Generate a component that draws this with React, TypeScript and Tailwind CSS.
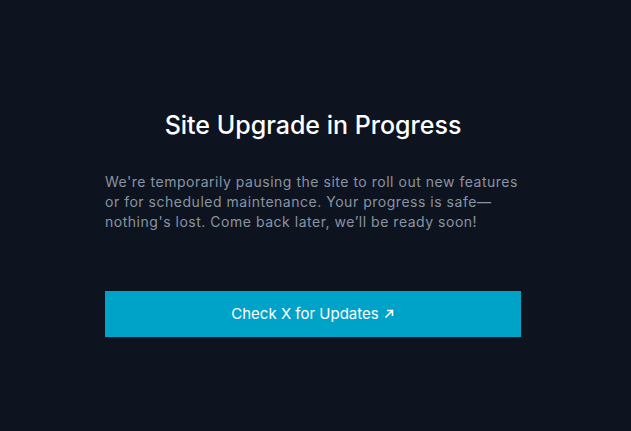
export default function App() {
  return (
    <div
      className="w-full h-[431px] bg-[#0d1420] flex justify-center pr-[5px]"
      style={{ fontFamily: "Inter, 'Noto Sans', sans-serif" }}
    >
      <div className="w-[416px] flex flex-col pt-[109px]">
        <h1 className="text-center text-white text-[25px] leading-[32px] font-medium">
          Site Upgrade in Progress
        </h1>
        <p className="mt-[31px] text-[#8a93a2] text-[14px] leading-[20px] tracking-[0.52px]">
          We're temporarily pausing the site to roll out new features or for scheduled maintenance. Your progress is safe—nothing's lost. Come back later, we’ll be ready soon!
        </p>
        <a
          href="#"
          className="mt-[59px] h-[46px] bg-[#00a3c8] text-white text-[15px] flex items-center justify-center gap-[4px]"
        >
          <span>Check X for Updates</span>
          <svg width="12" height="12" viewBox="0 0 12 12" fill="none" stroke="white" strokeWidth="1.6">
            <path d="M2.5 9.5 L9.5 2.5 M4 2.5 H9.5 V8" />
          </svg>
        </a>
      </div>
    </div>
  );
}
